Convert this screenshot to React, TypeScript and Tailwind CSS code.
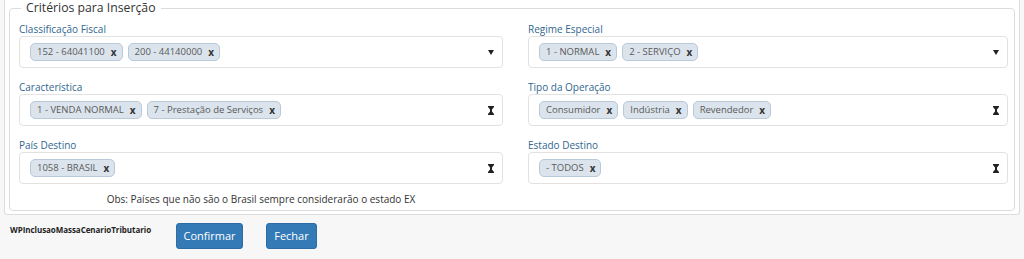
import { ReactNode } from 'react';

/* --- Small select2-like pieces --- */
function Chip({ text }: { text: string }) {
  return (
    <span className="flex items-center h-[18px] pl-[6px] pr-[5px] rounded-[5px] border border-[#b9c9d8] bg-[#dbe4ed] text-[#5a5a5a] text-[9.5px] leading-none whitespace-nowrap">
      {text}
      <span className="ml-[6px] font-bold text-[#333] text-[10px]">x</span>
    </span>
  );
}

function Caret({ kind }: { kind: 'down' | 'both' }) {
  if (kind === 'down') {
    return (
      <svg width="6" height="5" viewBox="0 0 6 5" className="shrink-0">
        <path d="M0 0H6L3 5Z" fill="#222" />
      </svg>
    );
  }
  return (
    <svg width="6" height="9" viewBox="0 0 6 9" className="shrink-0">
      <path d="M0 0H6V1L4 3.5H2L0 1Z M2 3H4V6H2Z M2 5.5H4L6 8V9H0V8Z" fill="#222" />
    </svg>
  );
}

function Field({ label, chips, caret, children }: { label: string; chips: string[]; caret: 'down' | 'both'; children?: ReactNode }) {
  return (
    <div className="w-full">
      <div className="text-[10px] leading-[14px] text-[#31668f]">{label}</div>
      <div className="h-[32px] flex items-center pl-[10px] pr-[8px] rounded-[4px] border border-[#e2e2e2] bg-white">
        <div className="flex-1 flex items-center gap-[5px]">
          {chips.map((c) => (
            <Chip key={c} text={c} />
          ))}
        </div>
        <Caret kind={caret} />
      </div>
      {children}
    </div>
  );
}

export default function App() {
  return (
    <div className="w-[1024px] h-[259px] bg-[#f7f7f7] overflow-hidden" style={{ fontFamily: '"Open Sans", "Noto Sans", sans-serif' }}>
      {/* Painel principal */}
      <div className="ml-[4px] w-[1016px] bg-white border-x border-b border-[#dcdcdc] rounded-b-[3px] pl-[4px] pr-[4px] pb-[3px]">
        <fieldset className="border border-[#dcdcdc] rounded-[4px] pl-[9px] pr-[5px] pb-[4px]">
          <legend className="ml-[2px] px-[5px] text-[12.25px] leading-[16px] text-[#333]">Critérios para Inserção</legend>

          <div className="flex gap-x-[25px] pt-[6px]">
            <div className="w-[484px] flex flex-col gap-[12px]">
              <Field label="Classificação Fiscal" chips={['152 - 64041100', '200 - 44140000']} caret="down" />
              <Field label="Característica" chips={['1 - VENDA NORMAL', '7 - Prestação de Serviços']} caret="both" />
              <Field label="País Destino" chips={['1058 - BRASIL']} caret="both">
                <div className="mt-[8px] text-center text-[10px] leading-[14px] text-[#333]">
                  Obs: Países que não são o Brasil sempre considerarão o estado EX
                </div>
              </Field>
            </div>
            <div className="w-[480px] flex flex-col gap-[12px]">
              <Field label="Regime Especial" chips={['1 - NORMAL', '2 - SERVIÇO']} caret="down" />
              <Field label="Tipo da Operação" chips={['Consumidor', 'Indústria', 'Revendedor']} caret="both" />
              <Field label="Estado Destino" chips={['- TODOS']} caret="both" />
            </div>
          </div>
        </fieldset>
      </div>

      {/* Rodapé com ações */}
      <div className="flex items-start pt-[8px] pl-[10px]">
        <div className="w-[166px] pt-[1px] text-[8px] leading-[12px] font-bold tracking-[-0.05px] text-[#222]">WPInclusaoMassaCenarioTributario</div>
        <button className="h-[26px] w-[67px] rounded-[3px] bg-[#337ab7] border border-[#2e6da4] text-white text-[11px]">Confirmar</button>
        <button className="ml-[23px] h-[26px] w-[51px] rounded-[3px] bg-[#337ab7] border border-[#2e6da4] text-white text-[11px]">Fechar</button>
      </div>
    </div>
  );
}
